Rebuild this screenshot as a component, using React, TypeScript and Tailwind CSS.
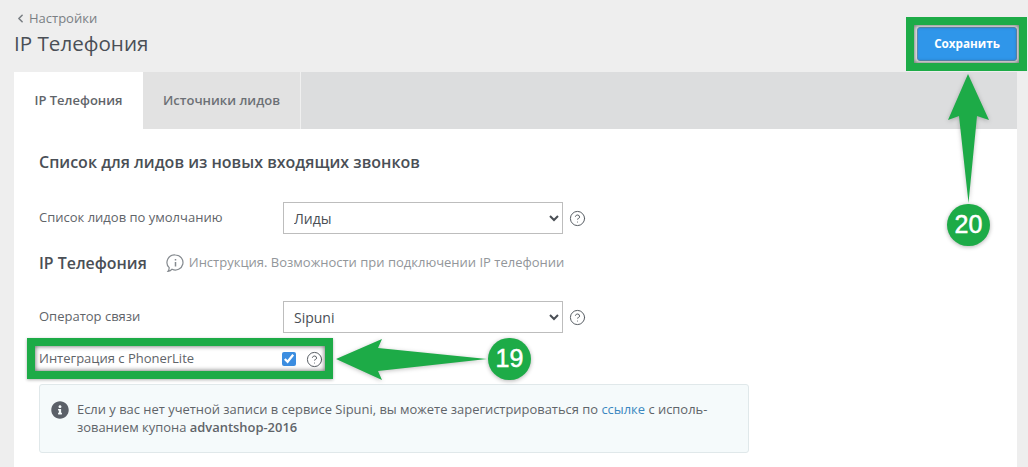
import { ChevronLeft, CircleHelp } from "lucide-react";
import { FaInfoCircle } from "react-icons/fa";

const Help = () => (
  <CircleHelp size={17} strokeWidth={1.4} className="text-[#555b61] shrink-0" />
);

const SelectRow = ({ label, value }: { label: string; value: string }) => (
  <div className="flex items-center">
    <label className="w-[244px] text-[13px] text-[#5f6469]">{label}</label>
    <select
      defaultValue={value}
      className="w-[280px] h-[32px] border border-[#bdbdbd] bg-white pl-[6px] pr-[4px] text-[14px] text-[#494e54]"
    >
      <option>{value}</option>
    </select>
    <span className="ml-[6px]">
      <Help />
    </span>
  </div>
);

const CommentInfo = () => (
  <svg width="20" height="20" viewBox="0 0 20 20" fill="none" stroke="#858a8f" strokeWidth="1.2">
    <path d="M10.5 2a7.5 7.5 0 1 1-3.4 14.2c-1 1.3-2.4 2-4.1 2.1.8-1 1.2-2.1 1.2-3.6A7.5 7.5 0 0 1 10.5 2Z" />
    <path d="M10.5 9v4.5M10.5 6v1.5" strokeWidth="1.5" />
  </svg>
);

const Annotations = () => (
  <>
    <div className="absolute left-[906px] top-[17px] w-[121px] h-[54px] border-[8px] border-[#1dab47] shadow-[inset_0_0_5px_rgba(0,0,0,0.65)]" />
    <div className="absolute left-[27px] top-[338px] w-[306px] h-[41px] border-[8px] border-[#1dab47] shadow-[inset_0_0_5px_rgba(0,0,0,0.65),0_1px_3px_rgba(0,0,0,0.3)]" />
    <svg className="absolute left-0 top-0 drop-shadow-[0_1px_2px_rgba(0,0,0,0.25)]" width="1028" height="467">
      <polygon points="968,74 989,120 977,116 968.5,203 959,116 948,120" fill="#1dab47" />
      <polygon points="336,359 382,339 378,348 487,359 378,371 382,380" fill="#1dab47" />
    </svg>
    <div className="absolute left-[947px] top-[204px] w-[43px] h-[42px] rounded-full bg-[#1dab47] text-white flex items-center justify-center text-[25px] [-webkit-text-stroke:0.5px_white] font-['Liberation_Sans',sans-serif] shadow-[0_1px_4px_rgba(0,0,0,0.3)]">
      20
    </div>
    <div className="absolute left-[488px] top-[338px] w-[43px] h-[42px] rounded-full bg-[#1dab47] text-white flex items-center justify-center text-[25px] [-webkit-text-stroke:0.5px_white] font-['Liberation_Sans',sans-serif] shadow-[0_1px_4px_rgba(0,0,0,0.3)]">
      19
    </div>
  </>
);

export default function App() {
  return (
    <div className="relative h-[467px] w-[1028px] overflow-hidden bg-[#eeeeee] font-['Open_Sans',sans-serif]">
      <header className="flex h-[72px] justify-between pl-[14px] pr-[11px]">
        <div className="pt-[9px]">
          <div className="flex items-center gap-[2px] text-[13px] leading-[18px] text-[#7a7f84]">
            <ChevronLeft size={13} strokeWidth={3} />
            Настройки
          </div>
          <h1 className="mt-[2px] text-[20.6px] leading-[28px] text-[#4a4f56]">IP Телефония</h1>
        </div>
        <button className="mt-[27px] h-[34px] w-[100px] rounded-[3px] border border-[#5f8fb8] bg-[#2f96ea] text-[11.7px] font-bold text-white">
          Сохранить
        </button>
      </header>

      <main className="mx-[14px] w-[1003px] bg-white h-[395px]">
        <nav className="flex h-[57px] bg-[#dcddde]">
          <div className="flex w-[129px] items-center justify-center bg-white text-[13px] font-semibold text-[#5f6469]">
            IP Телефония
          </div>
          <div className="flex w-[158px] items-center justify-center border-r border-[#f0f0f0] bg-[#e2e2e2] text-[13px] font-semibold text-[#6c7075]">
            Источники лидов
          </div>
        </nav>

        <section className="pl-[25px] pt-[22px]">
          <h2 className="text-[16px] leading-[22px] font-semibold text-[#4a4f56]">
            Список для лидов из новых входящих звонков
          </h2>
          <div className="mt-[29px]">
            <SelectRow label="Список лидов по умолчанию" value="Лиды" />
          </div>
          <div className="mt-[17px] flex items-center">
            <h3 className="text-[15.9px] leading-[24px] font-semibold text-[#4a4f56]">IP Телефония</h3>
            <span className="ml-[18px]">
              <CommentInfo />
            </span>
            <span className="ml-[4px] text-[13px] text-[#92969a]">
              Инструкция. Возможности при подключении IP телефонии
            </span>
          </div>
          <div className="mt-[26px]">
            <SelectRow label="Оператор связи" value="Sipuni" />
          </div>
          <div className="mt-[16px] flex h-[20px] items-center">
            <label className="w-[243px] text-[13px] text-[#5f6469]">Интеграция с PhonerLite</label>
            <input type="checkbox" defaultChecked className="h-[14px] w-[14px] accent-[#3b8de0]" />
            <span className="ml-[10px]">
              <Help />
            </span>
          </div>
          <div className="mt-[15px] flex h-[69px] w-[710px] gap-[8px] rounded-[3px] border border-[#e0e8ea] bg-[#f5fafb] pl-[11px] pr-[20px] pt-[15px]">
            <FaInfoCircle size={18} className="mt-[1px] shrink-0 text-[#5b6068]" />
            <p className="text-[12.93px] leading-[18px] text-[#5f6469]">
              Если у вас нет учетной записи в сервисе Sipuni, вы можете зарегистрироваться по{" "}
              <a className="text-[#3a87c0]">ссылке</a> с исполь-
              <br />
              зованием купона <b className="font-semibold">advantshop-2016</b>
            </p>
          </div>
        </section>
      </main>

      <Annotations />
    </div>
  );
}
